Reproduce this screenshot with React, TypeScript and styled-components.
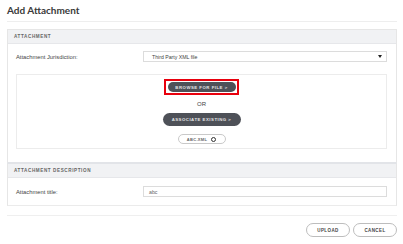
import React from 'react';
import styled, { createGlobalStyle } from 'styled-components';

const GlobalStyle = createGlobalStyle`
	html, body {
		margin: 0;
		padding: 0;
		background: #fff;
	}
	body {
		font-family: "Liberation Sans", Arial, sans-serif;
		color: #333;
	}
`;

export default function App() {
	return <Page>
		<GlobalStyle />
		<Title>Add Attachment</Title>
		<Panels>
			<Panel>
				<PanelHeader>Attachment</PanelHeader>
				<PanelBody>
					<FieldRow>
						<Label>Attachment Jurisdiction:</Label>
						<Select>
							<span>Third Party XML file</span>
							<Caret />
						</Select>
					</FieldRow>
					<DropZone>
						<Highlight>
							<DarkPill>Browse for file &gt;</DarkPill>
						</Highlight>
						<Or>OR</Or>
						<DarkPill wide>Associate existing &gt;</DarkPill>
						<FileChip>
							<span>ABC.XML</span>
							<RemoveIcon />
						</FileChip>
					</DropZone>
				</PanelBody>
			</Panel>
			<Panel joined>
				<PanelHeader>Attachment description</PanelHeader>
				<PanelBody compact>
					<FieldRow>
						<Label>Attachment title:</Label>
						<Input>abc</Input>
					</FieldRow>
				</PanelBody>
			</Panel>
		</Panels>
		<Footer>
			<LightPill>Upload</LightPill>
			<LightPill>Cancel</LightPill>
		</Footer>
	</Page>;
}

// ================== styled elements =====================

const Page = styled('div')`
	width: 390px;
	padding: 0 6px 0 7px;
`;

const Title = styled('div')`
	height: 22px;
	padding-top: 4px;
	box-sizing: border-box;
	border-bottom: 1px solid #eeeeee;
	font-family: Lato, "Liberation Sans", sans-serif;
	font-size: 10px;
	font-weight: bold;
	color: #3a3a3a;
`;

const Panels = styled('div')`
	margin-top: 7px;
`;

const Panel = styled('div')<{ joined?: boolean }>`
	border: 1px solid #e6e6e6;
	border-top-width: ${p => p.joined ? 0 : 1}px;
	border-bottom-width: ${p => p.joined ? 1 : 2}px;
	border-bottom-color: ${p => p.joined ? '#ebebeb' : '#e2e4e8'};
`;

const PanelHeader = styled('div')`
	height: 13px;
	display: flex;
	align-items: center;
	padding-left: 6px;
	background: #f1f2f4;
	border-bottom: 1px solid #e6e7ea;
	font-size: 4.6px;
	font-weight: bold;
	letter-spacing: 0.6px;
	text-transform: uppercase;
	color: #666;
`;

const PanelBody = styled('div')<{ compact?: boolean }>`
	padding: ${p => p.compact ? '8px 9px 8px 8px' : '7px 9px 13px 8px'};
	display: flex;
	flex-direction: column;
	gap: 12px;
`;

const FieldRow = styled('div')`
	display: flex;
	align-items: center;
	height: 11px;
`;

const Label = styled('div')`
	width: 127px;
	font-size: 5.8px;
	color: #444;
	padding-top: 1px;
`;

const Select = styled('div')`
	flex: 1;
	height: 11px;
	box-sizing: border-box;
	border: 1px solid #dcdcdc;
	display: flex;
	align-items: center;
	justify-content: space-between;
	padding: 0 4px 0 8px;
	font-size: 5.2px;
	color: #444;
`;

const Caret = styled('div')`
	width: 0;
	height: 0;
	border-left: 2.5px solid transparent;
	border-right: 2.5px solid transparent;
	border-top: 3px solid #222;
`;

const Input = styled(Select)`
	justify-content: flex-start;
	padding-left: 5px;
	color: #666;
`;

const DropZone = styled('div')`
	height: 75px;
	box-sizing: border-box;
	border: 1px solid #ececec;
	display: flex;
	flex-direction: column;
	align-items: center;
	padding-top: 4px;
`;

const Highlight = styled('div')`
	border: 2.5px solid #e8000d;
	padding: 1px 1.5px;
	display: flex;
`;

const DarkPill = styled('div')<{ wide?: boolean }>`
	width: ${p => p.wide ? 78 : 68}px;
	height: ${p => p.wide ? 13 : 10}px;
	border-radius: 7px;
	background: #4e5158;
	color: #e4e4e6;
	display: flex;
	align-items: center;
	justify-content: center;
	font-size: 4.3px;
	font-weight: bold;
	letter-spacing: 0.5px;
	text-transform: uppercase;
`;

const Or = styled('div')`
	margin: 4px 0 3px;
	font-size: 6px;
	color: #444;
	height: 11px;
	line-height: 11px;
`;

const FileChip = styled('div')`
	margin-top: 8px;
	width: 48px;
	height: 10px;
	box-sizing: border-box;
	border: 1px solid #c9c9c9;
	border-radius: 5px;
	background: #fff;
	display: flex;
	align-items: center;
	justify-content: center;
	gap: 4px;
	font-size: 4px;
	font-weight: bold;
	letter-spacing: 0.3px;
	color: #666;
`;

const RemoveIcon = styled('div')`
	width: 3px;
	height: 3px;
	border: 1.5px solid #333;
	border-radius: 50%;
`;

const Footer = styled('div')`
	margin-top: 9px;
	border-top: 1px solid #efefef;
	padding-top: 7px;
	display: flex;
	justify-content: flex-end;
	gap: 3px;
`;

const LightPill = styled('div')`
	width: 44px;
	height: 14px;
	box-sizing: border-box;
	border: 1px solid #bdbdbd;
	border-radius: 7px;
	display: flex;
	align-items: center;
	justify-content: center;
	font-size: 4.5px;
	font-weight: bold;
	letter-spacing: 0.4px;
	text-transform: uppercase;
	color: #444;
`;
